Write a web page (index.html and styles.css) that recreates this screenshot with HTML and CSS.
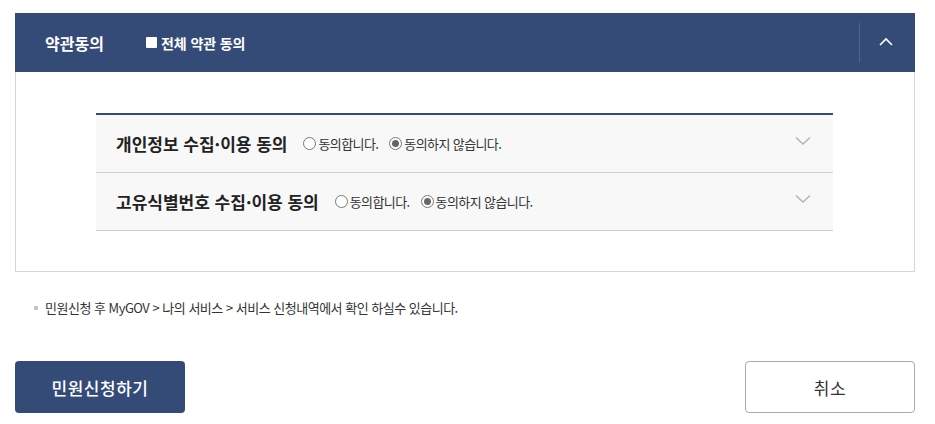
FILE: index.html
```html
<!DOCTYPE html>
<html lang="ko">
<head>
<meta charset="utf-8">
<link rel="stylesheet" href="styles.css">
</head>
<body>
<div class="page">
  <section class="terms">
    <header class="terms-head">
      <h2 class="terms-title">약관동의</h2>
      <label class="all-agree"><span class="checkbox"></span>전체 약관 동의</label>
      <div class="head-toggle">
        <svg width="14" height="9" viewBox="0 0 14 9"><path d="M1 8 L7 2 L13 8" fill="none" stroke="#fff" stroke-width="1.6"/></svg>
      </div>
    </header>
    <div class="terms-body">
      <div class="accordion">
        <div class="acc-row">
          <span class="acc-title">개인정보 수집·이용 동의</span>
          <span class="radio"><span class="dot"></span>동의합니다.</span>
          <span class="radio"><span class="dot on"></span>동의하지 않습니다.</span>
          <svg class="chev" width="16" height="10" viewBox="0 0 16 10"><path d="M1 1.5 L8 8 L15 1.5" fill="none" stroke="#a9b1c0" stroke-width="1.3"/></svg>
        </div>
        <div class="acc-row">
          <span class="acc-title">고유식별번호 수집·이용 동의</span>
          <span class="radio"><span class="dot"></span>동의합니다.</span>
          <span class="radio"><span class="dot on"></span>동의하지 않습니다.</span>
          <svg class="chev" width="16" height="10" viewBox="0 0 16 10"><path d="M1 1.5 L8 8 L15 1.5" fill="none" stroke="#a9b1c0" stroke-width="1.3"/></svg>
        </div>
      </div>
    </div>
  </section>
  <p class="note"><span class="bullet"></span>민원신청 후 MyGOV &gt; 나의 서비스 &gt; 서비스 신청내역에서 확인 하실수 있습니다.</p>
  <div class="actions">
    <button class="btn btn-primary">민원신청하기</button>
    <button class="btn btn-cancel">취소</button>
  </div>
</div>
</body>
</html>
```
FILE: styles.css
```css
* { box-sizing: border-box; }
body {
  margin: 0;
  background: #fff;
  font-family: "Noto Sans CJK KR", "Noto Sans", sans-serif;
  color: #222;
}
.page {
  padding: 13px 20px 0 15px;
}
.terms-head {
  height: 59px;
  background: #344b78;
  display: flex;
  align-items: center;
  padding-left: 30px;
  color: #fff;
}
.terms-title {
  margin: 0;
  font-size: 16px;
  font-weight: 700;
  letter-spacing: 0;
  width: 101px;
}
.all-agree {
  display: flex;
  align-items: center;
  font-size: 14px;
  font-weight: 700;
  letter-spacing: -0.1px;
}
.checkbox {
  width: 11px;
  height: 11px;
  background: #fff;
  border-radius: 1px;
  margin-right: 4px;
}
.head-toggle {
  margin-left: auto;
  width: 56px;
  height: 39px;
  border-left: 1px solid #4d6390;
  display: flex;
  align-items: center;
  justify-content: center;
}
.head-toggle svg { margin-top: -2px; margin-right: 3px; }
.terms-body {
  border: 1px solid #d5d5d5;
  border-top: 0;
  padding: 41px 81px 40px 80px;
}
.accordion {
  border-top: 2px solid #344b78;
}
.acc-row {
  height: 58px;
  background: #f8f8f8;
  border-bottom: 1px solid #cfcfcf;
  display: flex;
  align-items: center;
  padding: 0 20px;
}
.acc-title {
  font-size: 17px;
  font-weight: 700;
  letter-spacing: 0;
  color: #222;
  margin-right: 16px;
}
.radio {
  display: flex;
  align-items: center;
  font-size: 13px;
  letter-spacing: -0.6px;
  color: #333;
  margin-right: 11px;
}
.dot {
  width: 13px;
  height: 13px;
  border: 1px solid #777;
  border-radius: 50%;
  background: #fff;
  margin-right: 2px;
  position: relative;
}
.dot.on::after {
  content: "";
  position: absolute;
  left: 2px; top: 2px;
  width: 7px; height: 7px;
  border-radius: 50%;
  background: #666;
}
.chev { margin-left: auto; margin-right: 2px; margin-top: -6px; }
.note {
  margin: 26px 0 0 19px;
  font-size: 13px;
  letter-spacing: -0.5px;
  color: #333;
  display: flex;
  align-items: center;
}
.bullet {
  width: 4px; height: 4px;
  background: #c4c4c4;
  margin-right: 7px;
}
.actions {
  display: flex;
  justify-content: space-between;
  margin-top: 44px;
}
.btn {
  width: 170px;
  height: 52px;
  border-radius: 4px;
  font-family: inherit;
  font-size: 17px;
  letter-spacing: 0.5px;
  cursor: pointer;
}
.btn-primary {
  background: #344b78;
  color: #fff;
  border: 0;
  font-weight: 500;
}
.btn-cancel {
  background: #fff;
  border: 1px solid #aaa;
  color: #333;
}
```
